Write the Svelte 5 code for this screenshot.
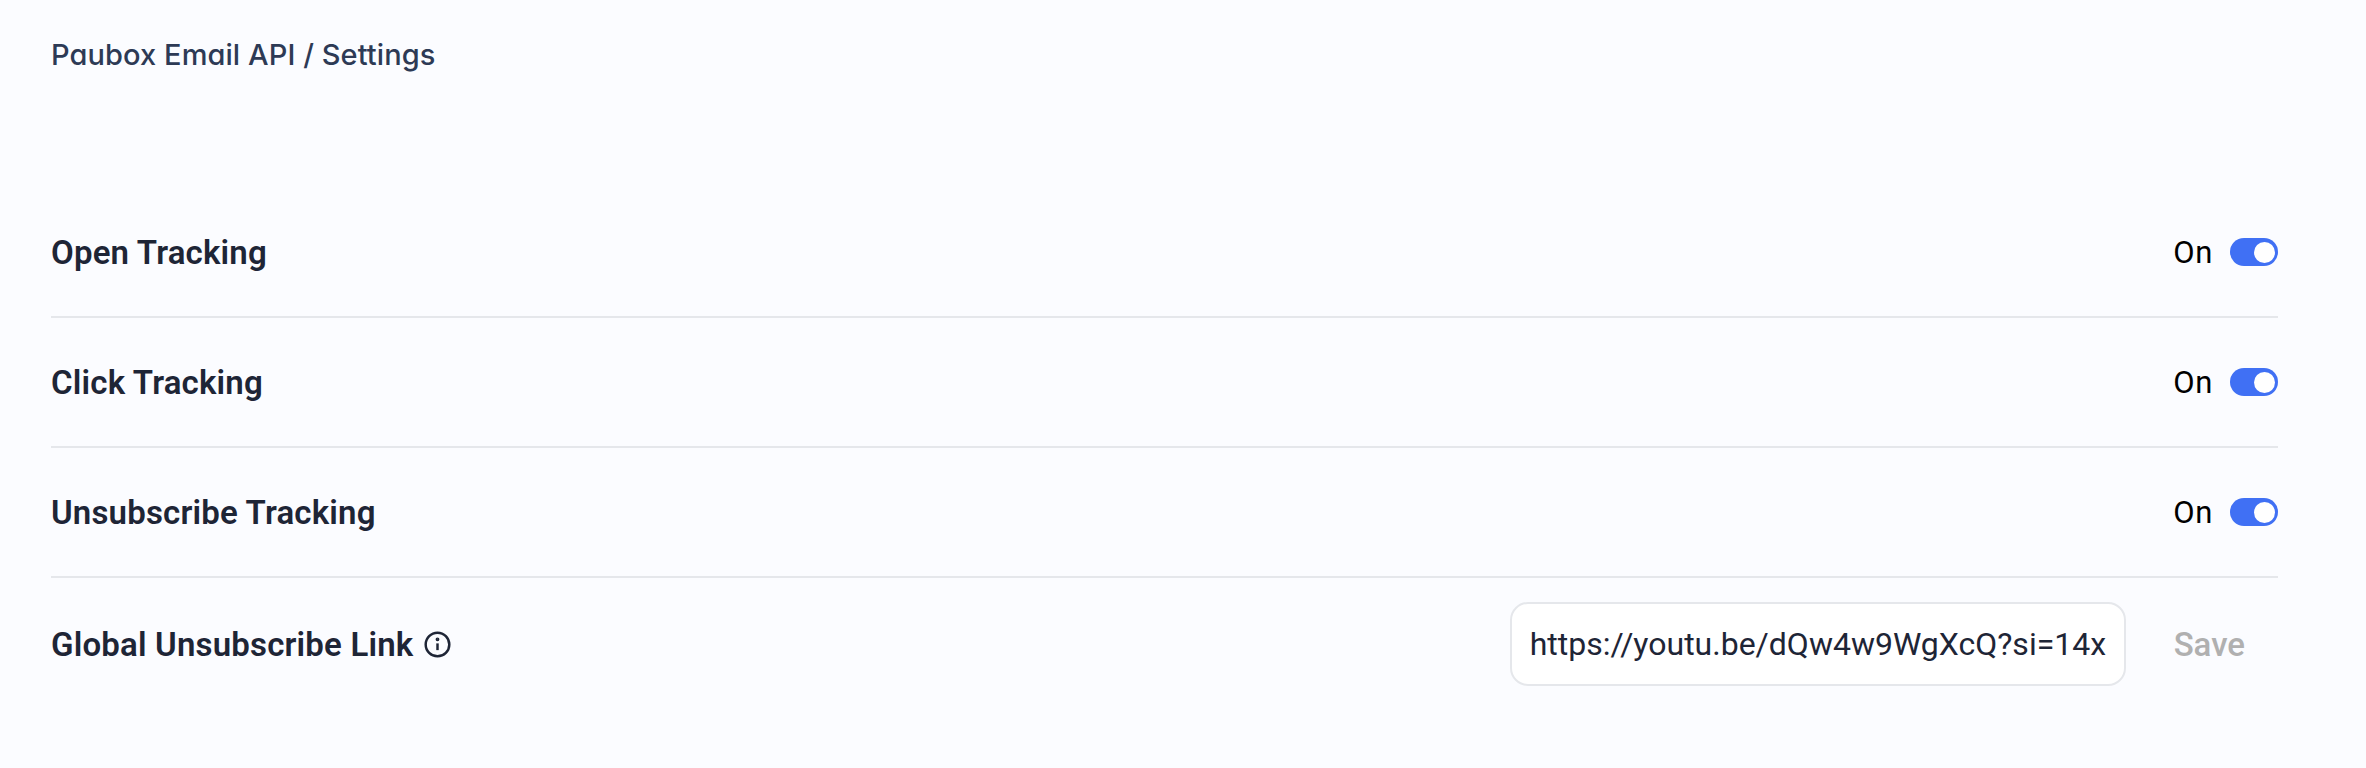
<script lang="ts">
  let rows = $state([
    { label: 'Open Tracking', enabled: true },
    { label: 'Click Tracking', enabled: true },
    { label: 'Unsubscribe Tracking', enabled: true },
  ]);

  let unsubscribeLink = $state('https://youtu.be/dQw4w9WgXcQ?si=14x');
</script>

<main class="settings">
  <h1 class="crumb">Paubox Email API / Settings</h1>

  <section class="list">
    {#each rows as row}
      <div class="row">
        <span class="label">{row.label}</span>
        <div class="toggle-group">
          <span class="state">{row.enabled ? 'On' : 'Off'}</span>
          <button
            class="toggle"
            class:on={row.enabled}
            type="button"
            aria-label={row.label}
            aria-pressed={row.enabled}
            onclick={() => (row.enabled = !row.enabled)}
          ></button>
        </div>
      </div>
    {/each}

    <div class="row last">
      <span class="label">
        Global Unsubscribe Link
        <svg class="info" viewBox="0 0 24 24" fill="none" stroke="currentColor" stroke-width="2.2" aria-hidden="true">
          <circle cx="12" cy="12" r="10.5" />
          <path d="M12 11v6" />
          <circle cx="12" cy="7.4" r="0.6" fill="currentColor" />
        </svg>
      </span>
      <div class="link-group">
        <input class="link" type="text" bind:value={unsubscribeLink} />
        <button class="save" type="button" disabled>Save</button>
      </div>
    </div>
  </section>
</main>

<style>
  :global(body) {
    background: #fbfcff;
  }

  .settings {
    height: 768px;
    box-sizing: border-box;
    padding: 0 88px 0 51px;
    overflow: hidden;
  }

  .crumb {
    margin: 0;
    height: 188px;
    padding-top: 37px;
    box-sizing: border-box;
    font-family: "Inter", sans-serif;
    font-feature-settings: "cv11";
    font-size: 29px;
    letter-spacing: 0.08px;
    line-height: 36px;
    font-weight: 500;
    color: #2d3a55;
  }

  .row {
    display: flex;
    align-items: center;
    justify-content: space-between;
    height: 130px;
    box-sizing: border-box;
    border-bottom: 2px solid #e5e7eb;
  }

  .row.last {
    padding-top: 2px;
    border-bottom: 0;
  }

  .label {
    display: flex;
    align-items: center;
    gap: 11px;
    font-family: "Roboto", sans-serif;
    font-size: 33px;
    letter-spacing: 0.18px;
    font-weight: 600;
    color: #1e2536;
  }

  .info {
    width: 27px;
    height: 27px;
  }

  .toggle-group {
    display: flex;
    align-items: center;
    gap: 17px;
  }

  .state {
    font-family: "Roboto", sans-serif;
    font-size: 31px;
    letter-spacing: 0.6px;
    color: #000;
  }

  .toggle {
    position: relative;
    width: 48px;
    height: 28px;
    padding: 0;
    border: 0;
    border-radius: 14px;
    background: #4070f4;
    cursor: pointer;
  }

  .toggle::after {
    content: '';
    position: absolute;
    top: 3.5px;
    left: 3px;
    width: 21px;
    height: 21px;
    border-radius: 50%;
    background: #fff;
  }

  .toggle.on::after {
    left: 24px;
  }

  .link-group {
    display: flex;
    align-items: center;
    gap: 48px;
    padding-right: 33px;
  }

  .link {
    width: 616px;
    height: 84px;
    box-sizing: border-box;
    padding: 0 18px;
    border: 2px solid #e5e7eb;
    border-radius: 18px;
    background: #fff;
    font-family: "Roboto", sans-serif;
    font-size: 32px;
    color: #1e2536;
    outline: none;
  }

  .save {
    padding: 0;
    border: 0;
    background: none;
    font-family: "Roboto", sans-serif;
    font-size: 33px;
    font-weight: 500;
    color: #b0b0b0;
  }
</style>
